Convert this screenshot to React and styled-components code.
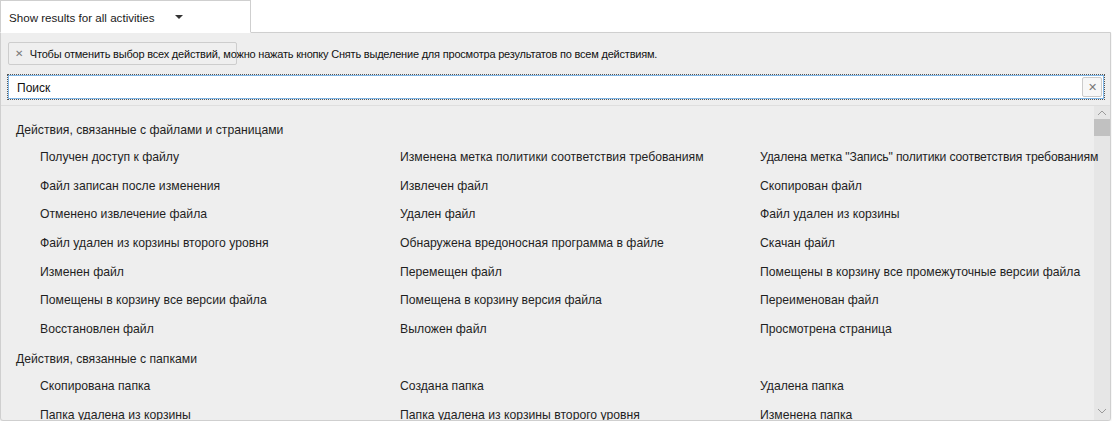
import styled, { createGlobalStyle } from 'styled-components';

const GlobalStyle = createGlobalStyle`
  body {
    margin: 0;
    background: #ffffff;
    font-family: "Liberation Sans", Arial, sans-serif;
    color: #1f1f1f;
  }
`;

// tight: the one label that runs up to the scrollbar in the original
const groups = [
  {
    title: 'Действия, связанные с файлами и страницами',
    items: [
      { label: 'Получен доступ к файлу' },
      { label: 'Изменена метка политики соответствия требованиям' },
      { label: 'Удалена метка "Запись" политики соответствия требованиям', tight: true },
      { label: 'Файл записан после изменения' },
      { label: 'Извлечен файл' },
      { label: 'Скопирован файл' },
      { label: 'Отменено извлечение файла' },
      { label: 'Удален файл' },
      { label: 'Файл удален из корзины' },
      { label: 'Файл удален из корзины второго уровня' },
      { label: 'Обнаружена вредоносная программа в файле' },
      { label: 'Скачан файл' },
      { label: 'Изменен файл' },
      { label: 'Перемещен файл' },
      { label: 'Помещены в корзину все промежуточные версии файла' },
      { label: 'Помещены в корзину все версии файла' },
      { label: 'Помещена в корзину версия файла' },
      { label: 'Переименован файл' },
      { label: 'Восстановлен файл' },
      { label: 'Выложен файл' },
      { label: 'Просмотрена страница' },
    ],
  },
  {
    title: 'Действия, связанные с папками',
    items: [
      { label: 'Скопирована папка' },
      { label: 'Создана папка' },
      { label: 'Удалена папка' },
      { label: 'Папка удалена из корзины' },
      { label: 'Папка удалена из корзины второго уровня' },
      { label: 'Изменена папка' },
    ],
  },
];

const Page = styled.div`
  width: 1112px;
`;

const Dropdown = styled.div`
  position: relative;
  z-index: 1;
  box-sizing: border-box;
  width: 251px;
  height: 33px;
  display: flex;
  align-items: center;
  padding: 2px 0 0 8px;
  background: #fff;
  border: 1px solid #cfcfcf;
  border-bottom-color: #fff;
  font-size: 11.6px;
  color: #1a1a1a;
`;

const DropdownLabel = styled.span`
  width: 166px;
`;

const Caret = styled.span`
  width: 0;
  height: 0;
  margin-top: -2px;
  border-left: 4px solid transparent;
  border-right: 4px solid transparent;
  border-top: 4px solid #333;
`;

const Panel = styled.div`
  box-sizing: border-box;
  width: 1111px;
  height: 389px;
  margin-top: -1px;
  display: flex;
  flex-direction: column;
  background: #eeeeee;
  border: 1px solid #cfcfcf;
  border-radius: 0 0 3px 3px;
  box-shadow: 0 1px 2px rgba(0, 0, 0, 0.12);
  overflow: hidden;
`;

const ChipRow = styled.div`
  padding: 9px 0 0 7px;
  height: 23px;
`;

const Chip = styled.div`
  box-sizing: border-box;
  width: 229px;
  height: 23px;
  display: flex;
  align-items: center;
  gap: 7px;
  padding-left: 6px;
  border: 1px solid #cdcdcd;
  border-radius: 2px;
  background: #efefef;
  white-space: nowrap;
  font-size: 11px;
  letter-spacing: -0.2px;
  color: #111;
`;

const ChipClose = styled.span`
  color: #777;
  font-size: 10px;
`;

const SearchBox = styled.div`
  box-sizing: border-box;
  margin: 10px 6px 0 7px;
  height: 24px;
  display: flex;
  align-items: center;
  justify-content: space-between;
  padding: 1px 1px 0 8px;
  background: #fff;
  border: 1px solid #7fb6e6;
  outline: 1px dotted #555;
  font-size: 12px;
  color: #111;
`;

const ClearButton = styled.span`
  box-sizing: border-box;
  width: 20px;
  height: 20px;
  margin-top: -1px;
  display: flex;
  align-items: center;
  justify-content: center;
  border: 1px solid #cbcbcb;
  border-radius: 2px;
  background: #f7f7f7;
  color: #777;
  font-size: 11px;
`;

const ListArea = styled.div`
  flex: 1;
  min-height: 0;
  margin-top: 6px;
  display: flex;
  border-top: 1px solid #dedede;
`;

const List = styled.div`
  position: relative;
  z-index: 1;
  flex: 1;
  min-width: 0;
  padding-top: 10px;
`;

const GroupTitle = styled.div`
  height: 27px;
  display: flex;
  align-items: center;
  padding-left: 15px;
  font-size: 12.2px;
  color: #1f1f1f;
`;

const ItemGrid = styled.div`
  display: grid;
  grid-template-columns: repeat(3, 360px);
  grid-auto-rows: 28.6px;
  padding-left: 39px;
  margin-bottom: 2px;
`;

const Item = styled.div`
  display: flex;
  align-items: center;
  white-space: nowrap;
  font-size: 12.2px;
  letter-spacing: ${({ $tight }) => ($tight ? '-0.16px' : 'normal')};
  color: #1f1f1f;
`;

const Scrollbar = styled.div`
  width: 16px;
  flex-shrink: 0;
  display: flex;
  flex-direction: column;
  align-items: center;
  background: #e6e6e6;
`;

const ScrollArrow = styled.svg`
  margin: ${({ $down }) => ($down ? 'auto 0 6px' : '4px 0 3px')};
`;

const Thumb = styled.div`
  width: 16px;
  height: 17px;
  background: #c1c1c1;
`;

const App = () => (
  <Page>
    <GlobalStyle />
    <Dropdown>
      <DropdownLabel>Show results for all activities</DropdownLabel>
      <Caret />
    </Dropdown>
    <Panel>
      <ChipRow>
        <Chip>
          <ChipClose>✕</ChipClose>
          Чтобы отменить выбор всех действий, можно нажать кнопку Снять выделение для просмотра результатов по всем действиям.
        </Chip>
      </ChipRow>
      <SearchBox>
        Поиск
        <ClearButton>✕</ClearButton>
      </SearchBox>
      <ListArea>
        <List>
          {groups.map((group) => (
            <div key={group.title}>
              <GroupTitle>{group.title}</GroupTitle>
              <ItemGrid>
                {group.items.map((item) => (
                  <Item key={item.label} $tight={item.tight}>{item.label}</Item>
                ))}
              </ItemGrid>
            </div>
          ))}
        </List>
        <Scrollbar>
          <ScrollArrow width="10" height="6" viewBox="0 0 10 6">
            <path d="M1 5 L5 1 L9 5" fill="none" stroke="#9a9a9a" strokeWidth="1" />
          </ScrollArrow>
          <Thumb />
          <ScrollArrow $down width="10" height="6" viewBox="0 0 10 6">
            <path d="M1 1 L5 5 L9 1" fill="none" stroke="#9a9a9a" strokeWidth="1" />
          </ScrollArrow>
        </Scrollbar>
      </ListArea>
    </Panel>
  </Page>
);

export default App;
